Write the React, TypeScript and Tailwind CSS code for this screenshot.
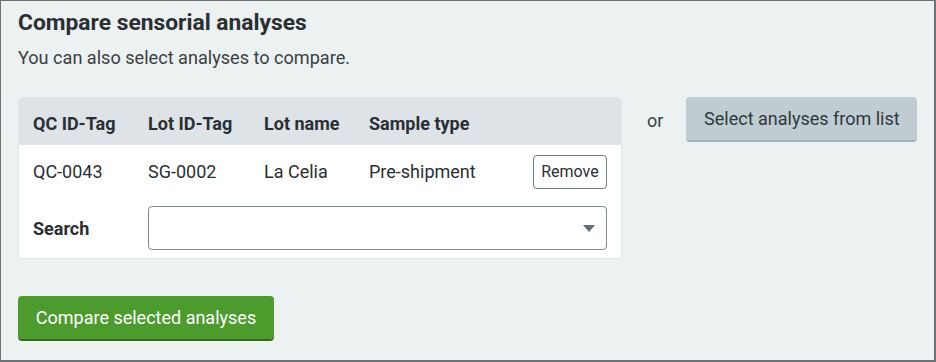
import React from "react";

export default function App() {
  return (
    <div
      className="w-[936px] h-[362px] border-t border-l border-r-2 border-b-2 border-[#6e7275] bg-[#ecf1f1] pl-[17px] pt-[8px] text-[#2a2f33]"
      style={{ fontFamily: "Roboto, 'Liberation Sans', sans-serif" }}
    >
      <h2 className="text-[22.8px] font-bold leading-[28px]">Compare sensorial analyses</h2>
      <p className="mt-[9px] text-[18.1px] leading-[24px] text-[#3a3f43]">You can also select analyses to compare.</p>

      <div className="mt-[27px] flex items-start">
        <div className="w-[604px] rounded-[4px] border border-[#e0e6e8] bg-white overflow-hidden">
          <div className="grid grid-cols-[115px_116px_105px_1fr_auto] items-center h-[47px] bg-[#dde3e6] px-[14px] pt-[3px] text-[18px] font-bold">
            <div>QC ID-Tag</div>
            <div>Lot ID-Tag</div>
            <div>Lot name</div>
            <div>Sample type</div>
            <div></div>
          </div>
          <div className="grid grid-cols-[115px_116px_105px_1fr_auto] items-center h-[53px] px-[14px] text-[18px]">
            <div>QC-0043</div>
            <div>SG-0002</div>
            <div>La Celia</div>
            <div>Pre-shipment</div>
            <button className="h-[34px] w-[74px] rounded-[4px] border border-[#6f7d85] bg-white text-[16px] text-[#2a2f33]">
              Remove
            </button>
          </div>
          <div className="grid grid-cols-[115px_1fr] items-center px-[14px] pt-[8px] pb-[8px]">
            <div className="text-[18px] font-bold">Search</div>
            <div className="relative h-[44px] rounded-[4px] border border-[#7d8b92] bg-white">
              <svg
                className="absolute right-[11px] top-[18px]"
                width="12"
                height="7"
                viewBox="0 0 12 7"
              >
                <path d="M0 0 H12 L6 7 Z" fill="#5f6e77" />
              </svg>
            </div>
          </div>
        </div>

        <div className="ml-[25px] mt-[12px] text-[18px] leading-[24px] text-[#3a3f43]">or</div>

        <button className="ml-[23px] h-[45px] w-[231px] rounded-[4px] bg-[#bfcdd3] border-b-2 border-[#9fb0b8] text-[18px] text-[#2f383d]">
          Select analyses from list
        </button>
      </div>

      <button className="mt-[37px] h-[45px] w-[256px] rounded-[4px] bg-[#4c9c2d] border-b-2 border-[#2f6d1d] text-[18px] text-white">
        Compare selected analyses
      </button>
    </div>
  );
}
